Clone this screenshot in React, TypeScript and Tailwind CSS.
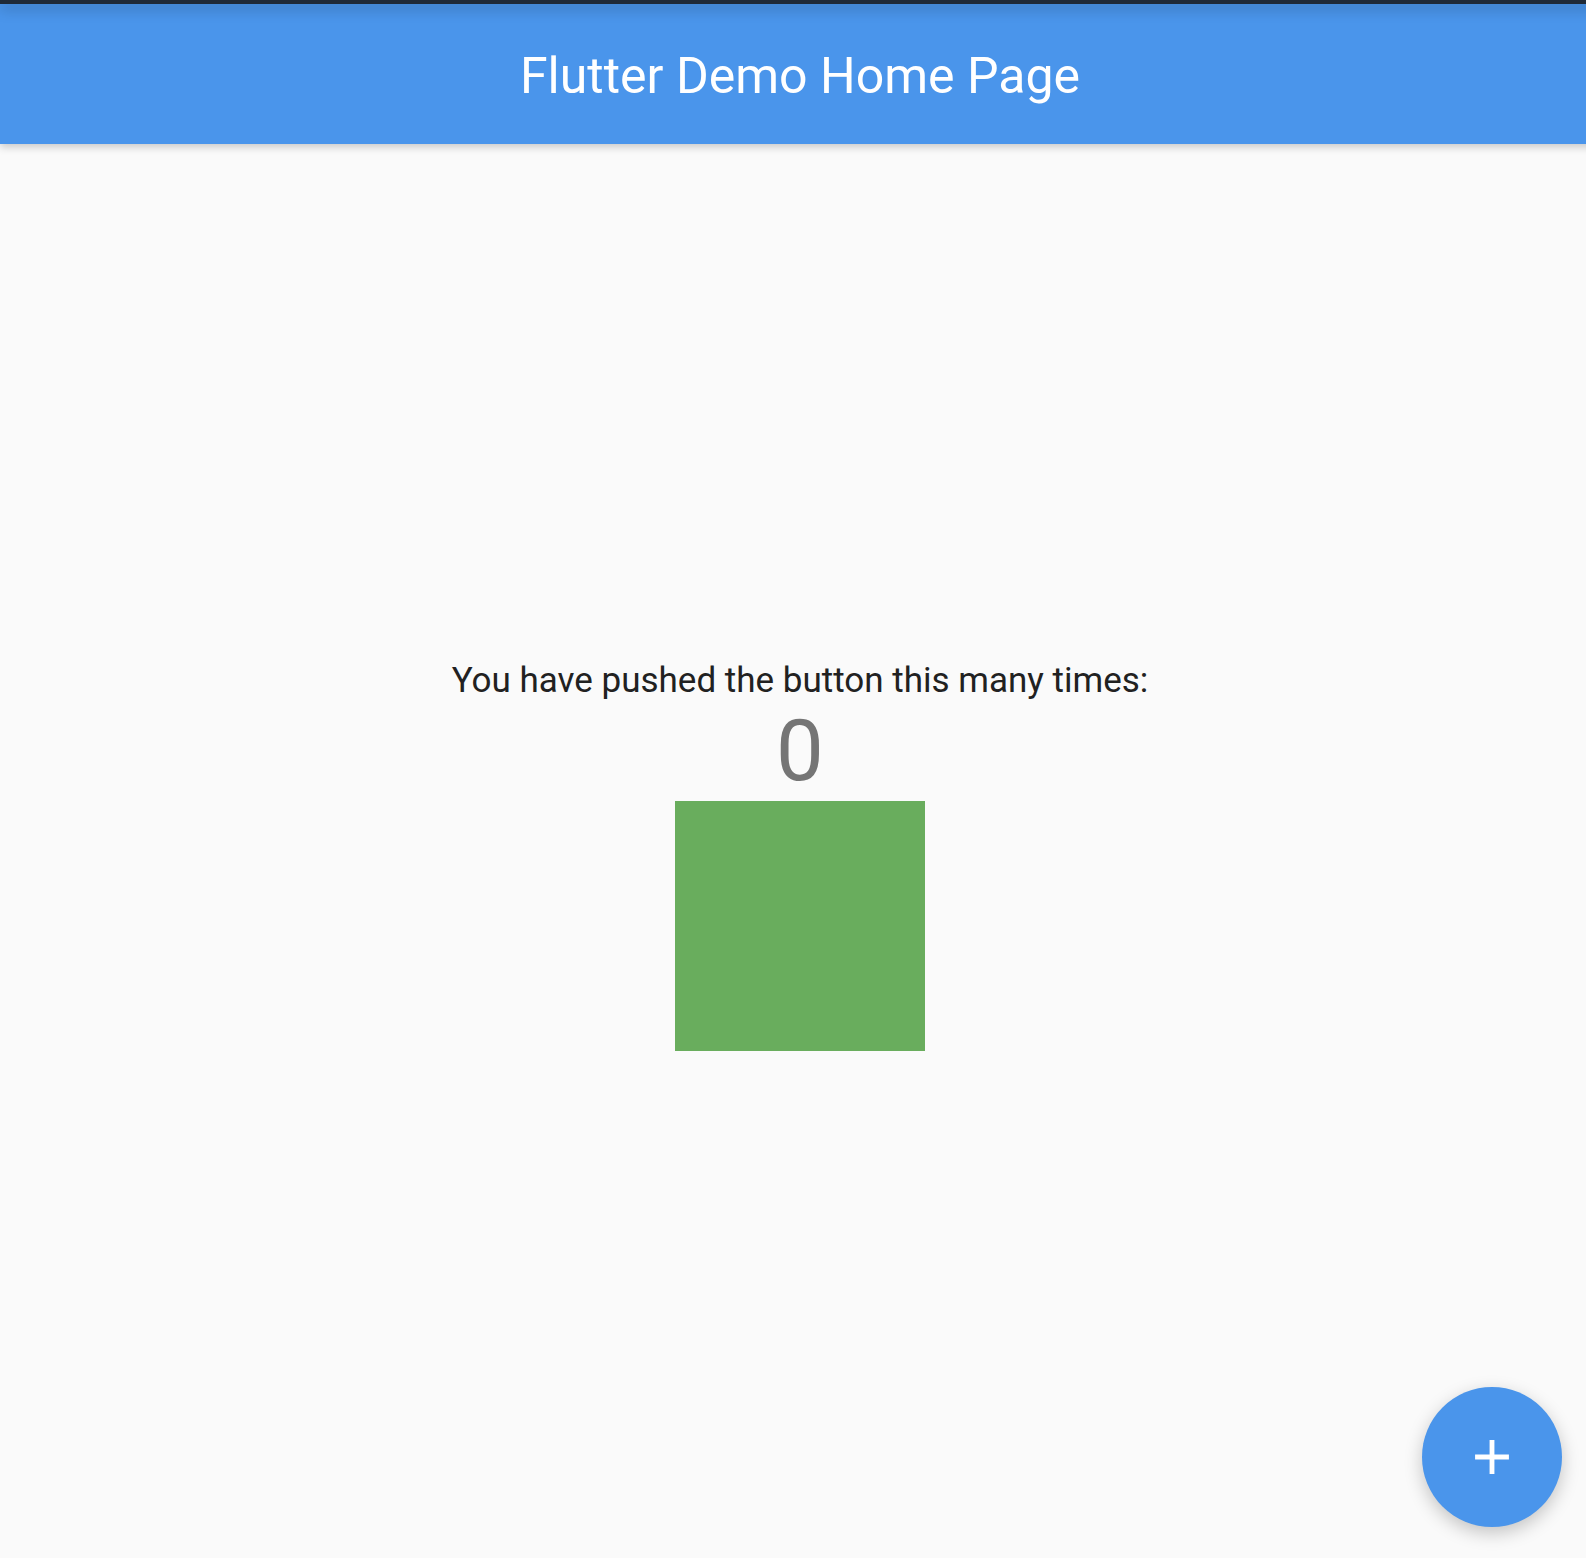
import React from 'react';

function AddIcon() {
  return (
    <svg width="58" height="58" viewBox="0 0 24 24" fill="white">
      <path d="M19 13h-6v6h-2v-6H5v-2h6V5h2v6h6v2z" />
    </svg>
  );
}

export default function App() {
  const count = 0;

  return (
    <div className="w-[1586px] h-[1558px] overflow-hidden bg-[#fafafa]">
      {/* app surface is slightly bigger than the capture */}
      <div className="relative flex flex-col w-[1600px] h-[1566px] bg-[#fafafa]" style={{ fontFamily: 'Roboto, "Noto Sans", sans-serif' }}>
        {/* status strip */}
        <div className="relative z-20 h-[4px] shrink-0 bg-[#1f2a38] shadow-[0_4px_14px_rgba(0,0,0,0.38)]" />

        {/* app bar */}
        <header className="relative z-10 h-[140px] shrink-0 flex items-center justify-center pt-[4px] bg-[#4a95eb] shadow-[0_3px_8px_rgba(0,0,0,0.2)]">
          <h1 className="text-white text-[50px] leading-none font-normal">Flutter Demo Home Page</h1>
        </header>

        {/* body */}
        <main className="flex-1 flex flex-col items-center justify-center">
          <p className="text-[#212121] text-[35px] leading-[41px]">You have pushed the button this many times:</p>
          <p className="text-[#757575] text-[85px] leading-[100px]">{count}</p>
          <div className="w-[250px] h-[250px] bg-[#69ad5d]" />
        </main>

        {/* fab */}
        <button className="absolute right-[38px] bottom-[39px] w-[140px] h-[140px] rounded-full bg-[#4a95eb] flex items-center justify-center shadow-[0_6px_18px_rgba(0,0,0,0.22)]">
          <AddIcon />
        </button>
      </div>
    </div>
  );
}
